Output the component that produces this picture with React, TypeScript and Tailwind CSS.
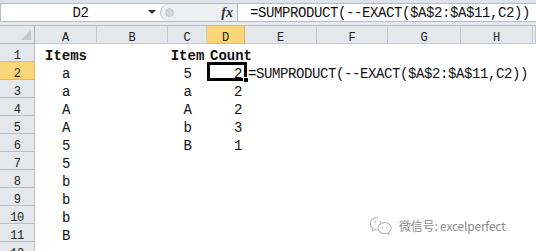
import React from "react";

const mono = "font-['Liberation_Mono','Noto_Sans_CJK_SC',monospace]";

const colLetters = ["A", "B", "C", "D", "E", "F", "G", "H", ""];

type Cell = { t: string; bold?: boolean; align?: "c" | "l" | "r" };

// row -> column index (0 = A) -> cell
const data: Record<number, Record<number, Cell>> = {
  1: { 0: { t: "Items", bold: true }, 2: { t: "Item", bold: true }, 3: { t: "Count", bold: true, align: "l" } },
  2: { 0: { t: "a" }, 2: { t: "5" }, 3: { t: "2", align: "r" }, 4: { t: "=SUMPRODUCT(--EXACT($A$2:$A$11,C2))", align: "l" } },
  3: { 0: { t: "a" }, 2: { t: "a" }, 3: { t: "2", align: "r" } },
  4: { 0: { t: "A" }, 2: { t: "A" }, 3: { t: "2", align: "r" } },
  5: { 0: { t: "A" }, 2: { t: "b" }, 3: { t: "3", align: "r" } },
  6: { 0: { t: "5" }, 2: { t: "B" }, 3: { t: "1", align: "r" } },
  7: { 0: { t: "5" } },
  8: { 0: { t: "b" } },
  9: { 0: { t: "b" } },
  10: { 0: { t: "b" } },
  11: { 0: { t: "B" } },
};

const rows = [1, 2, 3, 4, 5, 6, 7, 8, 9, 10, 11, 12];

const WeChatIcon = () => (
  <svg width="24" height="20" viewBox="0 0 24 20" fill="none" stroke="#b9b9b9" strokeWidth="1.1">
    <path d="M9 1.5C4.6 1.5 1.2 4.3 1.2 7.8c0 2 1.1 3.7 2.9 4.9l-.7 2.3 2.7-1.4c.9.3 1.9.4 2.9.4" />
    <path d="M15.8 6.6c-3.8 0-6.8 2.5-6.8 5.5s3 5.5 6.8 5.5c.8 0 1.5-.1 2.2-.3l2.2 1.2-.6-2c1.6-1 2.6-2.6 2.6-4.4 0-3-3-5.5-6.4-5.5z" />
    <circle cx="6.2" cy="5.8" r="0.9" fill="#b9b9b9" stroke="none" />
    <circle cx="11.4" cy="5.8" r="0.9" fill="#b9b9b9" stroke="none" />
    <circle cx="13.6" cy="11" r="0.8" fill="#b9b9b9" stroke="none" />
    <circle cx="18" cy="11" r="0.8" fill="#b9b9b9" stroke="none" />
  </svg>
);

export default function App() {
  return (
    <div className={`relative w-[536px] h-[251px] overflow-hidden bg-white text-[#111] ${mono}`}>
      {/* Formula bar */}
      <div className="h-[4px] bg-[#dfe3e8] border-b border-[#b4bbc4]" />
      <div className="flex h-[18px] border-b border-[#b4bbc4]">
        <div className="relative w-[160px] bg-white border-l border-[#b4bbc4] text-center text-[14px] tracking-[-0.4px] leading-[24px] h-[17px]">
          <span className="relative -top-[3px]">D2</span>
          <div className="absolute right-[4px] top-[6px] w-0 h-0 border-l-[4px] border-r-[4px] border-t-[4px] border-l-transparent border-r-transparent border-t-[#333]" />
        </div>
        <div className="flex flex-1 items-center justify-end bg-[#edeff2] border-l border-[#b4bbc4] rounded-l-full w-[77px] max-w-[77px] pr-[4px] relative">
          <div className="absolute left-[4px] top-[4px] w-[9px] h-[9px] rounded-full bg-[#d3d7dc] border border-[#c3c8ce]" />
          <span className="font-['Liberation_Serif',serif] italic font-bold text-[14px] text-[#333] leading-none">fx</span>
        </div>
        <div className="flex-1 bg-white border-l border-[#b4bbc4] pl-[12px] text-[14px] tracking-[-0.4px] leading-[18px] whitespace-nowrap">
          =SUMPRODUCT(--EXACT($A$2:$A$11,C2))
        </div>
      </div>
      <div className="h-[4px] bg-[#e8ebee] border-b border-[#b4bbc4]" />

      {/* Grid */}
      <div className="grid grid-cols-[35px_62px_71px_39px_38px_72px_71px_73px_72px_1fr] auto-rows-[18px]">
        {/* Corner */}
        <div className="flex items-end justify-end pr-[3px] pb-[3px] bg-[#e4e7eb] border-r border-b border-[#a9b0b8]">
          <svg width="10" height="10" viewBox="0 0 10 10">
            <polygon points="10,0 10,10 0,10" fill="#c4c8ce" />
          </svg>
        </div>
        {colLetters.map((c, i) => (
          <div
            key={"h" + i}
            className={
              c === "D"
                ? "bg-[#f9d779] border-r border-b border-[#f0b24a] text-center text-[12px] leading-[24px] text-[#222]"
                : "bg-[#e4e7eb] border-r border-b border-[#c3c8ce] text-center text-[12px] leading-[24px] text-[#222]"
            }
          >
            {c}
          </div>
        ))}

        {rows.map((r) => (
          <React.Fragment key={r}>
            <div
              className={
                r === 2
                  ? "bg-[#f9d779] border-r border-b border-[#f0b24a] text-center text-[12px] tracking-[-0.5px] leading-[24px] text-[#222]"
                  : "bg-[#e4e7eb] border-r border-b border-[#b7bdc5] text-center text-[12px] tracking-[-0.5px] leading-[24px] text-[#222]"
              }
            >
              {r}
            </div>
            {colLetters.map((_, ci) => {
              const cell = data[r]?.[ci];
              const sel = r === 2 && ci === 3;
              const align = cell?.align ?? "c";
              return (
                <div
                  key={ci}
                  className={`relative whitespace-nowrap text-[14px] leading-[24px] ${
                    cell?.bold ? "font-bold" : "tracking-[-0.4px]"
                  } ${align === "c" ? "text-center" : align === "r" ? "text-right pr-[3px]" : "text-left pl-[3px]"}`}
                >
                  {cell?.t}
                  {sel && (
                    <div className="absolute left-0 top-0 w-[40px] h-[19px] border-[3px] border-black">
                      <div className="absolute right-[-5px] bottom-[-5px] w-[6px] h-[6px] bg-black border border-white" />
                    </div>
                  )}
                </div>
              );
            })}
          </React.Fragment>
        ))}
      </div>

      {/* Watermark */}
      <div className="absolute left-[369px] top-[216px] flex items-center gap-[6px]">
        <WeChatIcon />
        <span className="font-['Noto_Sans_CJK_SC',sans-serif] text-[12px] text-[#8c8c8c] leading-none tracking-[-0.2px]">
          微信号: excelperfect
        </span>
      </div>
    </div>
  );
}
